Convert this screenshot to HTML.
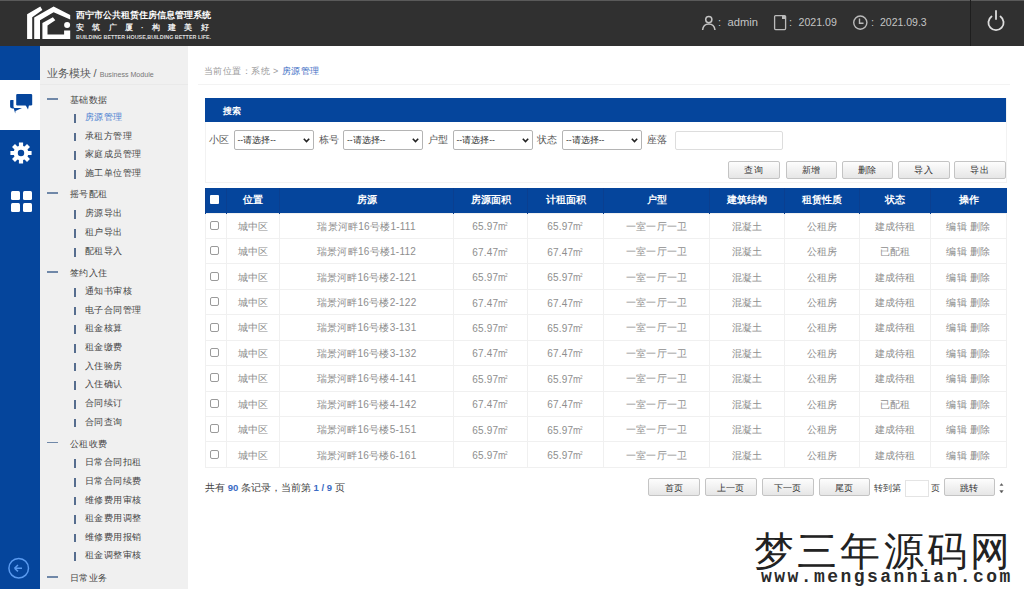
<!DOCTYPE html>
<html><head><meta charset="utf-8">
<style>
*{margin:0;padding:0;box-sizing:border-box}
html,body{width:1024px;height:589px;overflow:hidden;background:#fff;font-family:"Liberation Sans",sans-serif}
.a{position:absolute;white-space:nowrap}
#hd{position:absolute;left:0;top:0;width:1024px;height:46px;background:#303030;border-top:1px solid #5a5a5a}
#lc{position:absolute;left:0;top:46px;width:40px;height:543px;background:#05459c}
#lc .w{position:absolute;left:0;top:34px;width:40px;height:50px;background:#fff}
#sb{position:absolute;left:40px;top:46px;width:148px;height:543px;background:#f0f0f0}
.sec{position:absolute;left:30px;font-size:9px;letter-spacing:0.4px;color:#444;line-height:12px}
.sec:before{content:"";position:absolute;left:-23px;top:4.3px;width:11px;height:1.5px;background:#7088a8}
.it{position:absolute;left:45px;font-size:9px;letter-spacing:0.4px;color:#444;line-height:12px}
.it:before{content:"";position:absolute;left:-11px;top:3px;width:2px;height:8.5px;background:#566d8e}
.btn{position:absolute;height:18px;border:1px solid #c4c4c4;border-radius:2px;background:linear-gradient(#fdfdfd,#e6e6e6);font-size:9px;letter-spacing:0.3px;color:#333;text-align:center;line-height:17px}
.lbl{position:absolute;top:134px;font-size:9.5px;color:#555;line-height:12px}
.sel{position:absolute;top:130px;height:19.5px;width:80px;border:1px solid #b4b4b4;border-radius:2px;background:#fff;font-size:8.5px;color:#333;line-height:19px;padding-left:3px}
.sel svg{position:absolute;right:3px;top:7px}
table{position:absolute;left:205px;top:188px;border-collapse:collapse;table-layout:fixed;width:802px}
th{background:#05459c;color:#fff;font-size:9.5px;font-weight:bold;height:25px;border-left:1px solid #0a3f90;text-align:center}
td{height:25.45px;font-size:10px;letter-spacing:0.25px;color:#8e8e8e;text-align:center;border:1px solid #f0f0f0;padding-top:2px}
.cb{display:inline-block;width:9px;height:9px;border:1px solid #9a9a9a;border-radius:2px;background:#fff;vertical-align:middle}
th .cb{border:none;background:#fff;border-radius:1px;position:relative;left:-1.5px;top:-1.5px;width:8.5px;height:8.5px}
td .m2{display:inline-block;font-size:11.5px;letter-spacing:0;transform:scaleX(0.78);transform-origin:left;margin-right:-2px;line-height:10px}
td .m2 i{font-style:normal;font-size:6px;vertical-align:top;position:relative;top:-2px;margin-left:-0.5px}
td .cb{position:relative;left:-1.5px;top:-2.3px}
</style></head><body>
<div id="hd">
 <svg class="a" style="left:0;top:-1px" width="80" height="46" viewBox="0 0 80 46">
  <g fill="#fff">
   <polygon points="27.1,39 32.2,39 32.2,17.3 42.4,10.1 40.3,6.4 27.1,14.2"/>
   <polygon points="34.2,39 34.2,17.5 53.6,6.4 70.2,15 70.2,19.5 53.6,12.2 40,20.3 40,39"/>
   <polygon points="42.4,39 42.4,23 52.9,17.3 55.3,20.3 47.5,25.4 47.5,34.6 64.1,34.6 64.1,30.5 70.2,30.5 70.2,39"/>
   <circle cx="67.1" cy="25.1" r="3"/>
  </g>
 </svg>
 <div class="a" style="left:76px;top:8px;font-family:'Liberation Serif',serif;font-weight:bold;font-size:8.9px;color:#fff;line-height:13px">西宁市公共租赁住房信息管理系统</div>
 <div class="a" style="left:76px;top:22px;font-size:8px;font-weight:bold;color:#eee;line-height:10px;letter-spacing:8.25px">安筑广厦·构建美好</div>
 <div class="a" style="left:76px;top:33px;font-size:5.4px;color:#ddd;font-weight:bold;line-height:6px">BUILDING BETTER HOUSE,BUILDING BETTER LIFE.</div>
 <svg class="a" style="left:700px;top:14px" width="18" height="16" viewBox="0 0 18 16"><g fill="none" stroke="#c4c4c4" stroke-width="1.5"><circle cx="8.8" cy="4.6" r="3.1"/><path d="M2.6 15 Q3.2 9 8.8 9 Q14.2 9 15 15"/></g></svg>
 <div class="a" style="left:718px;top:13px;font-size:11px;color:#c4c4c4;line-height:16px">:</div>
 <div class="a" style="left:727.5px;top:13px;font-size:11.2px;color:#c4c4c4;line-height:16px">admin</div>
 <svg class="a" style="left:773px;top:13.3px" width="15" height="17" viewBox="0 0 15 17"><g fill="none" stroke="#bbb" stroke-width="1.3"><rect x="1.6" y="1.6" width="11" height="14" rx="1"/></g><rect x="9" y="2" width="3" height="3" fill="#bbb"/></svg>
 <div class="a" style="left:789px;top:13px;font-size:11px;color:#c4c4c4;line-height:16px">:</div>
 <div class="a" style="left:798.5px;top:13px;font-size:10.6px;color:#c4c4c4;line-height:16px">2021.09</div>
 <svg class="a" style="left:852px;top:13px" width="17" height="17" viewBox="0 0 17 17"><g fill="none" stroke="#bbb" stroke-width="1.4"><circle cx="8.3" cy="8.6" r="6.6"/><path d="M7.5 4.5 V9.3 H11.5"/></g></svg>
 <div class="a" style="left:871px;top:13px;font-size:11px;color:#c4c4c4;line-height:16px">:</div>
 <div class="a" style="left:880px;top:13px;font-size:10.5px;color:#c4c4c4;line-height:16px">2021.09.3</div>
 <div class="a" style="left:970px;top:-1px;width:1px;height:46px;background:#1e1e1e"></div>
 <svg class="a" style="left:984px;top:8px" width="24" height="24" viewBox="0 0 24 24"><g fill="none" stroke="#ddd" stroke-width="1.8" stroke-linecap="round"><path d="M7.5 7.5 A7.6 7.6 0 1 0 16.5 7.5"/><path d="M12 2 V10"/></g></svg>
</div>

<div id="lc">
 <div class="w"></div>
 <svg class="a" style="left:8px;top:44px" width="28" height="26" viewBox="0 0 28 26">
  <g fill="#05459c">
   <rect x="8.2" y="3.9" width="16" height="11.5" rx="1.2"/>
   <polygon points="17.5,15 21,15 20,19.5"/>
   <path d="M2.1 10.5 Q2.1 10 3 10 H5.5 V16.5 Q5.5 18 7 18 H14 L7.5 21 L7.2 23.5 L5.8 18.5 Q2.1 18.5 2.1 16.5 Z"/>
  </g>
 </svg>
 <svg class="a" style="left:9px;top:94.5px" width="24" height="24" viewBox="0 0 24 24"><path fill="#fff" fill-rule="evenodd" d="M9.90 4.90 L9.90 1.41 L14.10 1.41 L14.10 4.90 A7.40 7.40 0 0 1 15.53 5.50 L18.01 3.02 L20.98 5.99 L18.50 8.47 A7.40 7.40 0 0 1 19.10 9.90 L22.59 9.90 L22.59 14.10 L19.10 14.10 A7.40 7.40 0 0 1 18.50 15.53 L20.98 18.01 L18.01 20.98 L15.53 18.50 A7.40 7.40 0 0 1 14.10 19.10 L14.10 22.59 L9.90 22.59 L9.90 19.10 A7.40 7.40 0 0 1 8.47 18.50 L5.99 20.98 L3.02 18.01 L5.50 15.53 A7.40 7.40 0 0 1 4.90 14.10 L1.41 14.10 L1.41 9.90 L4.90 9.90 A7.40 7.40 0 0 1 5.50 8.47 L3.02 5.99 L5.99 3.02 L8.47 5.50 A7.40 7.40 0 0 1 9.90 4.90 Z M8.80 12.00 a3.20 3.20 0 1 0 6.40 0 a3.20 3.20 0 1 0 -6.40 0 Z"/></svg>
 <div class="a" style="left:10.7px;top:145px;width:9.2px;height:9px;background:#fff;border-radius:1.5px"></div>
 <div class="a" style="left:23.2px;top:145px;width:9px;height:9px;background:#fff;border-radius:1.5px"></div>
 <div class="a" style="left:10.7px;top:157px;width:9.2px;height:8.8px;background:#fff;border-radius:1.5px"></div>
 <div class="a" style="left:23.2px;top:157px;width:9px;height:8.8px;background:#fff;border-radius:1.5px"></div>
 <svg class="a" style="left:7px;top:510px" width="24" height="24" viewBox="0 0 24 24"><g fill="none" stroke="#5b9bf0" stroke-width="1.5"><circle cx="11.7" cy="12.2" r="9.8"/></g><path d="M7.5 12.2 L11 9 M7.5 12.2 L11 15.4 M7.5 12.2 H15" stroke="#5b9bf0" stroke-width="1.5" fill="none"/></svg>
</div>

<div id="sb">
 <div class="a" style="left:6.5px;top:20px;font-size:11px;color:#5a5a5a;line-height:14px">业务模块 <span style="font-size:11px">/</span> <span style="font-size:7.1px;color:#777">Business Module</span></div>
 <div class="a" style="left:0;top:38px;width:148px;height:1px;background:#e9e9e9"></div>
</div>
<div id="menu" class="a" style="left:40px;top:0;width:148px;height:589px"><div class="sec" style="top:94.00px">基础数据</div><div class="it" style="top:111.20px;color:#4a7fd0">房源管理</div><div class="it" style="top:129.70px">承租方管理</div><div class="it" style="top:148.30px">家庭成员管理</div><div class="it" style="top:167.00px">施工单位管理</div><div class="sec" style="top:188.00px">摇号配租</div><div class="it" style="top:207.00px">房源导出</div><div class="it" style="top:226.00px">租户导出</div><div class="it" style="top:245.00px">配租导入</div><div class="sec" style="top:266.80px">签约入住</div><div class="it" style="top:285.20px">通知书审核</div><div class="it" style="top:303.60px">电子合同管理</div><div class="it" style="top:322.20px">租金核算</div><div class="it" style="top:341.00px">租金缴费</div><div class="it" style="top:359.70px">入住验房</div><div class="it" style="top:378.40px">入住确认</div><div class="it" style="top:397.00px">合同续订</div><div class="it" style="top:415.60px">合同查询</div><div class="sec" style="top:437.50px">公租收费</div><div class="it" style="top:456.40px">日常合同扣租</div><div class="it" style="top:475.00px">日常合同续费</div><div class="it" style="top:493.60px">维修费用审核</div><div class="it" style="top:512.20px">租金费用调整</div><div class="it" style="top:530.80px">维修费用报销</div><div class="it" style="top:549.40px">租金调整审核</div><div class="sec" style="top:571.80px">日常业务</div></div>

<div class="a" style="left:204px;top:65px;font-size:9px;letter-spacing:0.45px;color:#999;line-height:12px">当前位置：系统 &gt; <span style="color:#3b6cc4">房源管理</span></div>
<div class="a" style="left:198px;top:84px;width:812px;height:1px;background:#f3f3f3"></div>

<div class="a" style="left:205px;top:98px;width:802px;height:85px;border:1px solid #f2f2f2;border-top:none"></div>
<div class="a" style="left:205px;top:98px;width:801px;height:24px;background:#05459c"></div>
<div class="a" style="left:222.5px;top:104.5px;font-size:9px;font-weight:bold;letter-spacing:0.3px;color:#fff;line-height:12px">搜索</div>
<div class="lbl" style="left:208.5px">小区</div><div class="sel" style="left:233.5px">--请选择--<svg width="7" height="5" viewBox="0 0 7 5"><path d="M0.8 0.8 L3.5 3.6 L6.2 0.8" fill="none" stroke="#222" stroke-width="1.6"/></svg></div><div class="lbl" style="left:318.5px">栋号</div><div class="sel" style="left:343px">--请选择--<svg width="7" height="5" viewBox="0 0 7 5"><path d="M0.8 0.8 L3.5 3.6 L6.2 0.8" fill="none" stroke="#222" stroke-width="1.6"/></svg></div><div class="lbl" style="left:428px">户型</div><div class="sel" style="left:452.5px">--请选择--<svg width="7" height="5" viewBox="0 0 7 5"><path d="M0.8 0.8 L3.5 3.6 L6.2 0.8" fill="none" stroke="#222" stroke-width="1.6"/></svg></div><div class="lbl" style="left:537px">状态</div><div class="sel" style="left:562px">--请选择--<svg width="7" height="5" viewBox="0 0 7 5"><path d="M0.8 0.8 L3.5 3.6 L6.2 0.8" fill="none" stroke="#222" stroke-width="1.6"/></svg></div><div class="lbl" style="left:646.5px">座落</div><div class="a" style="left:674.5px;top:130.5px;width:108px;height:19px;border:1px solid #ddd;border-radius:2px;background:#fff"></div><div class="btn" style="left:728px;top:160.5px;width:51.5px">查询</div><div class="btn" style="left:785.5px;top:160.5px;width:51.5px">新增</div><div class="btn" style="left:841.5px;top:160.5px;width:51.5px">删除</div><div class="btn" style="left:898px;top:160.5px;width:51.5px">导入</div><div class="btn" style="left:954px;top:160.5px;width:51.5px">导出</div>
<table><colgroup><col style="width:21px"><col style="width:53px"><col style="width:174px"><col style="width:74px"><col style="width:76px"><col style="width:106px"><col style="width:75px"><col style="width:75px"><col style="width:71px"><col style="width:76px"></colgroup><tr><th><span class="cb"></span></th><th>位置</th><th>房源</th><th>房源面积</th><th>计租面积</th><th>户型</th><th>建筑结构</th><th>租赁性质</th><th>状态</th><th>操作</th></tr><tr><td><span class="cb"></span></td><td>城中区</td><td>瑞景河畔16号楼1-111</td><td>65.97<span class="m2">m<i>2</i></span></td><td>65.97<span class="m2">m<i>2</i></span></td><td>一室一厅一卫</td><td>混凝土</td><td>公租房</td><td>建成待租</td><td>编辑 删除</td></tr><tr><td><span class="cb"></span></td><td>城中区</td><td>瑞景河畔16号楼1-112</td><td>67.47<span class="m2">m<i>2</i></span></td><td>67.47<span class="m2">m<i>2</i></span></td><td>一室一厅一卫</td><td>混凝土</td><td>公租房</td><td>已配租</td><td>编辑 删除</td></tr><tr><td><span class="cb"></span></td><td>城中区</td><td>瑞景河畔16号楼2-121</td><td>65.97<span class="m2">m<i>2</i></span></td><td>65.97<span class="m2">m<i>2</i></span></td><td>一室一厅一卫</td><td>混凝土</td><td>公租房</td><td>建成待租</td><td>编辑 删除</td></tr><tr><td><span class="cb"></span></td><td>城中区</td><td>瑞景河畔16号楼2-122</td><td>67.47<span class="m2">m<i>2</i></span></td><td>67.47<span class="m2">m<i>2</i></span></td><td>一室一厅一卫</td><td>混凝土</td><td>公租房</td><td>建成待租</td><td>编辑 删除</td></tr><tr><td><span class="cb"></span></td><td>城中区</td><td>瑞景河畔16号楼3-131</td><td>65.97<span class="m2">m<i>2</i></span></td><td>65.97<span class="m2">m<i>2</i></span></td><td>一室一厅一卫</td><td>混凝土</td><td>公租房</td><td>建成待租</td><td>编辑 删除</td></tr><tr><td><span class="cb"></span></td><td>城中区</td><td>瑞景河畔16号楼3-132</td><td>67.47<span class="m2">m<i>2</i></span></td><td>67.47<span class="m2">m<i>2</i></span></td><td>一室一厅一卫</td><td>混凝土</td><td>公租房</td><td>建成待租</td><td>编辑 删除</td></tr><tr><td><span class="cb"></span></td><td>城中区</td><td>瑞景河畔16号楼4-141</td><td>65.97<span class="m2">m<i>2</i></span></td><td>65.97<span class="m2">m<i>2</i></span></td><td>一室一厅一卫</td><td>混凝土</td><td>公租房</td><td>建成待租</td><td>编辑 删除</td></tr><tr><td><span class="cb"></span></td><td>城中区</td><td>瑞景河畔16号楼4-142</td><td>67.47<span class="m2">m<i>2</i></span></td><td>67.47<span class="m2">m<i>2</i></span></td><td>一室一厅一卫</td><td>混凝土</td><td>公租房</td><td>已配租</td><td>编辑 删除</td></tr><tr><td><span class="cb"></span></td><td>城中区</td><td>瑞景河畔16号楼5-151</td><td>65.97<span class="m2">m<i>2</i></span></td><td>65.97<span class="m2">m<i>2</i></span></td><td>一室一厅一卫</td><td>混凝土</td><td>公租房</td><td>建成待租</td><td>编辑 删除</td></tr><tr><td><span class="cb"></span></td><td>城中区</td><td>瑞景河畔16号楼6-161</td><td>65.97<span class="m2">m<i>2</i></span></td><td>65.97<span class="m2">m<i>2</i></span></td><td>一室一厅一卫</td><td>混凝土</td><td>公租房</td><td>建成待租</td><td>编辑 删除</td></tr></table>
<div class="a" style="left:205px;top:482px;font-size:9.5px;color:#444;line-height:12px">共有 <b style="color:#3b6cc4;font-weight:bold">90</b> 条记录，当前第 <b style="color:#3b6cc4">1 / 9</b> 页</div><div class="btn" style="left:648.2px;top:478px;width:51.5px;line-height:19px">首页</div><div class="btn" style="left:705px;top:478px;width:51.5px;line-height:19px">上一页</div><div class="btn" style="left:762px;top:478px;width:51.5px;line-height:19px">下一页</div><div class="btn" style="left:818.5px;top:478px;width:51.5px;line-height:19px">尾页</div><div class="a" style="left:873.5px;top:482px;font-size:9px;color:#444;line-height:12px">转到第</div><div class="a" style="left:904.5px;top:479.5px;width:24px;height:17.5px;border:1px solid #e4e4e4;background:#fff"></div><div class="a" style="left:930.5px;top:482px;font-size:9px;color:#444;line-height:12px">页</div><div class="btn" style="left:943.5px;top:478px;width:51.5px;line-height:19px">跳转</div><svg class="a" style="left:998px;top:481px" width="7" height="14" viewBox="0 0 7 14"><path d="M2 4.5 L3.5 2.5 L5 4.5 Z M1.8 9.5 L3.5 12 L5.2 9.5 Z" fill="#555" stroke="#777" stroke-width="0.6"/></svg>

<div class="a" style="left:754px;top:529.5px;font-family:'Liberation Serif',serif;font-size:40px;color:#222;line-height:44px;letter-spacing:3.2px;text-shadow:0 0 2px #fff">梦三年源码网</div>
<div class="a" style="left:761px;top:567px;font-family:'Liberation Mono',monospace;font-weight:bold;font-size:18px;color:#2a2a2a;line-height:18px;letter-spacing:2.45px;margin-top:1px">www.mengsannian.com</div>
</body></html>
